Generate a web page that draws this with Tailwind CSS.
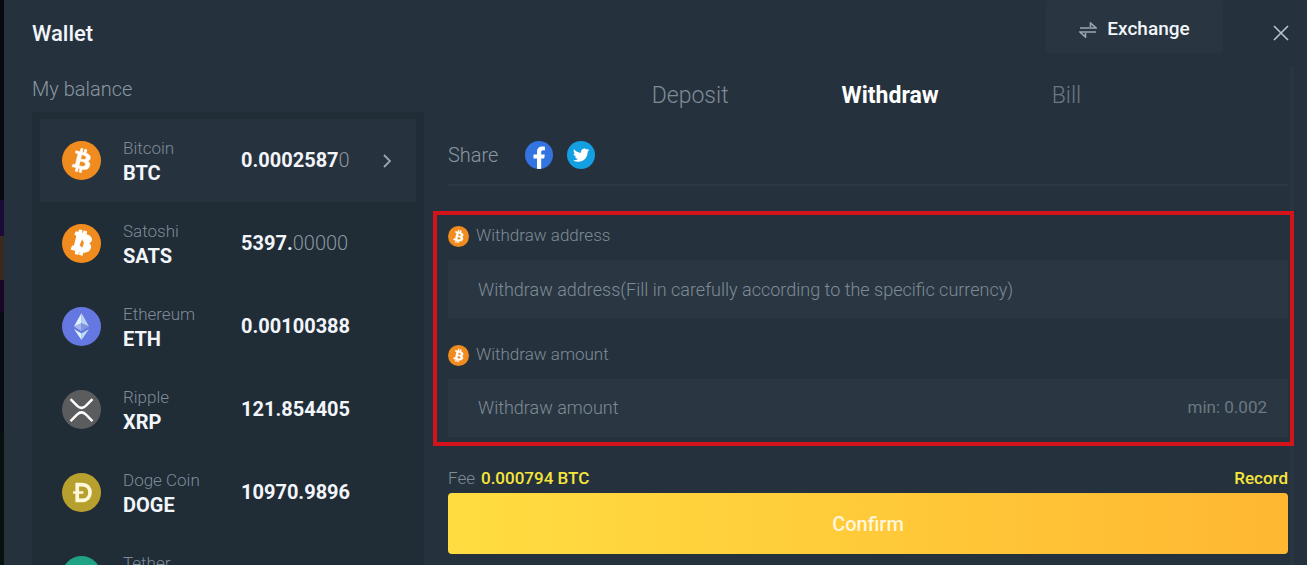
<!DOCTYPE html>
<html lang="en">

<head>
  <meta charset="UTF-8">
  <meta name="viewport" content="width=device-width, initial-scale=1">
  <title>Wallet</title>
  <script src="https://cdn.jsdelivr.net/npm/@tailwindcss/browser@4"></script>
</head>

<body class="flex h-screen overflow-hidden bg-[#05070d] font-['Roboto',sans-serif] text-[#7f8b96]">
  <!-- shared icons -->
  <svg class="hidden">
    <symbol id="btc" viewBox="0 0 32 32">
      <circle cx="16" cy="16" r="16" fill="#f08c1f" />
      <path fill="#fff" stroke="#fff" stroke-width=".5" d="M23.189 14.02c.314-2.096-1.283-3.223-3.465-3.975l.708-2.84-1.728-.43-.69 2.765c-.454-.114-.92-.22-1.385-.326l.695-2.783L15.596 6l-.708 2.839c-.376-.086-.746-.17-1.104-.26l.002-.009-2.384-.595-.46 1.846s1.283.294 1.256.312c.7.175.826.638.805 1.006l-.806 3.235c.048.012.11.03.18.057l-.183-.045-1.13 4.532c-.086.212-.303.531-.793.41.018.025-1.256-.313-1.256-.313l-.858 1.978 2.25.561c.418.105.828.215 1.231.318l-.715 2.872 1.727.43.708-2.84c.472.127.93.245 1.378.357l-.706 2.828 1.728.43.715-2.866c2.948.558 5.164.333 6.097-2.333.752-2.146-.037-3.385-1.588-4.192 1.13-.26 1.98-1.003 2.207-2.538zm-3.95 5.538c-.533 2.147-4.148.986-5.32.695l.95-3.805c1.172.293 4.929.872 4.37 3.11zm.535-5.569c-.487 1.953-3.495.96-4.47.717l.86-3.45c.975.243 4.118.696 3.61 2.733z" />
    </symbol>
  </svg>

  <!-- page behind the dialog -->
  <div class="flex w-1 shrink-0 flex-col" aria-hidden="true">
    <div class="h-[200px] bg-[#080910]"></div>
    <div class="h-9 bg-[#1c0a38]"></div>
    <div class="h-11 bg-[#3a2a20]"></div>
    <div class="h-8 bg-[#180826]"></div>
    <div class="h-[120px] bg-[#060b14]"></div>
    <div class="flex-1 bg-[#07120e]"></div>
  </div>

  <main class="flex min-w-0 flex-1 flex-col bg-[#25323d]">
    <header class="flex h-[66px] shrink-0 items-center pl-7 pr-[18px]">
      <h1 class="flex-1 text-[22px] font-medium text-[#f2f5fa]">Wallet</h1>
      <button class="mr-[50px] flex h-[53px] w-[177px] items-center justify-center gap-2.5 self-start rounded bg-[#293540] pt-1.5 text-[19px] font-medium text-[#f2f5fa]">
        <svg class="h-4 w-[18px]" viewBox="0 0 18 16" fill="none" stroke="#9aa6b0" stroke-width="1.6">
          <path d="M1 6h16L11.500 1v4M17 10H1l5.500 5v-4" />
        </svg>
        Exchange
      </button>
      <button aria-label="Close">
        <svg class="size-4" viewBox="0 0 16 16" fill="none" stroke="#b9c3cb" stroke-width="1.6">
          <path d="M1 1l14 14M15 1L1 15" />
        </svg>
      </button>
    </header>

    <div class="flex min-h-0 flex-1 pl-7 pr-[13px]">
      <aside class="flex w-[392px] shrink-0 flex-col">
        <h2 class="h-[46px] pt-2 text-xl font-light leading-[30px] text-[#8a96a1]">My balance</h2>
        <ul class="min-h-0 flex-1 overflow-hidden bg-[#202c36] px-2 pt-[7px] text-xl font-bold leading-[25px] text-[#f2f5fa]">
          <li class="flex h-[83px] items-center bg-[#26323d] pl-[22px] pr-6">
            <svg class="mr-[22px] size-[39px]"><use href="#btc" /></svg>
            <div class="w-[118px]">
              <p class="text-[17px] font-light leading-[25px] text-[#7f8b96]">Bitcoin</p>
              <p>BTC</p>
            </div>
            <p class="flex-1">0.0002587<span class="font-light text-[#8a96a1]">0</span></p>
            <svg class="h-3.5 w-2.5" viewBox="0 0 10 14" fill="none" stroke="#9aa6b0" stroke-width="1.8">
              <path d="M2 1l6 6-6 6" />
            </svg>
          </li>
          <li class="flex h-[83px] items-center pl-[22px] pr-6">
            <svg class="mr-[22px] size-[39px]" viewBox="0 0 32 32">
              <circle cx="16" cy="16" r="16" fill="#f08c1f" />
              <path fill="#fff" stroke="#fff" stroke-linejoin="round" d="M11.500 6.500l2.300.5.500-2 2 .5-.4 2 1.500.4.700-2 2 .6-.7 2.200c3 .8 5 2.200 4.700 4.500-.2 1.300-1.500 2-2.700 2.400 1.500 1 2.500 2.300 1.800 4.200-.8 2.400-3.300 3.500-6.100 3.100l-.6 2.600-2-.5.500-2.500-1.300-.3-.7 2.600-2-.5.600-2.600-4-1 1-2.500 1.500.2 2.300-9-1.700-.8z" />
              <path fill="#f08c1f" d="M16.500 12.500l1.500 3-1.500 4-2-2z" />
            </svg>
            <div class="w-[118px]">
              <p class="text-[17px] font-light leading-[25px] text-[#7f8b96]">Satoshi</p>
              <p>SATS</p>
            </div>
            <p class="flex-1">5397.<span class="font-light text-[#8a96a1]">00000</span></p>
          </li>
          <li class="flex h-[83px] items-center pl-[22px] pr-6">
            <svg class="mr-[22px] size-[39px]" viewBox="0 0 32 32">
              <circle cx="16" cy="16" r="16" fill="#6577e0" />
              <path fill="#e3f1fb" d="M16 5l-6.200 11L16 13.300z" />
              <path fill="#b5d3f2" d="M16 5l6.200 11L16 13.300z" />
              <path fill="#a3b8ea" d="M9.800 16L16 13.300v6.500z" />
              <path fill="#7f96dc" d="M22.200 16L16 13.300v6.500z" />
              <path fill="#e3f1fb" d="M9.800 18L16 21.700V27z" />
              <path fill="#b5e0f2" d="M22.200 18L16 21.700V27z" />
            </svg>
            <div class="w-[118px]">
              <p class="text-[17px] font-light leading-[25px] text-[#7f8b96]">Ethereum</p>
              <p>ETH</p>
            </div>
            <p class="flex-1">0.00100388</p>
          </li>
          <li class="flex h-[83px] items-center pl-[22px] pr-6">
            <svg class="mr-[22px] size-[39px]" viewBox="0 0 32 32" fill="none">
              <circle cx="16" cy="16" r="16" fill="#5b5c5e" />
              <path stroke="#fff" stroke-width="2" d="M7 7.500l5.500 5.500q3.500 3.300 7 0L25 7.500M7 25.500l5.500-5.500q3.500-3.300 7 0l5.500 5.500" />
            </svg>
            <div class="w-[118px]">
              <p class="text-[17px] font-light leading-[25px] text-[#7f8b96]">Ripple</p>
              <p>XRP</p>
            </div>
            <p class="flex-1">121.854405</p>
          </li>
          <li class="flex h-[83px] items-center pl-[22px] pr-6">
            <svg class="mr-[22px] size-[39px]" viewBox="0 0 32 32" fill="none">
              <circle cx="16" cy="16" r="16" fill="#b7a02e" />
              <path stroke="#fff8dc" stroke-width="3" d="M12.500 9.500h4c4 0 6.500 2.500 6.500 6.500s-2.500 6.500-6.500 6.500h-4z" />
              <path stroke="#fff8dc" stroke-width="2" d="M9 16h8.500" />
            </svg>
            <div class="w-[118px]">
              <p class="text-[17px] font-light leading-[25px] text-[#7f8b96]">Doge Coin</p>
              <p>DOGE</p>
            </div>
            <p class="flex-1">10970.9896</p>
          </li>
          <li class="flex h-[83px] items-center pl-[22px] pr-6">
            <svg class="mr-[22px] size-[39px]" viewBox="0 0 32 32">
              <circle cx="16" cy="16" r="16" fill="#1fa285" />
              <path fill="#fff" d="M9 9h14v3h-5.500v12h-3V12H9z" />
            </svg>
            <div class="w-[118px]">
              <p class="text-[17px] font-light leading-[25px] text-[#7f8b96]">Tether</p>
              <p>USDT</p>
            </div>
          </li>
        </ul>
      </aside>

      <section class="ml-[9px] flex min-w-0 flex-1 flex-col border-r-4 border-[#293641]">
        <nav class="flex h-[60px] shrink-0 items-center justify-center gap-[113px] pl-2.5 text-[23px]">
          <a href="#" class="font-light text-[#7f8b96]">Deposit</a>
          <a href="#" class="font-bold text-white">Withdraw</a>
          <a href="#" class="font-light text-[#6c7883]">Bill</a>
        </nav>

        <div class="ml-[15px] mr-0.5 flex h-[60px] shrink-0 items-center gap-3.5 border-b-2 border-[#2c3944]">
          <span class="w-[63px] text-xl font-light text-[#8a96a1]">Share</span>
          <a href="#" aria-label="Facebook">
            <svg class="size-7" viewBox="0 0 28 28">
              <circle cx="14" cy="14" r="14" fill="#3474e0" />
              <path fill="#fff" d="M12 27.800V17.500H8.500v-4H12V11c0-3.600 2-5.500 5.200-5.500 1.300 0 2.800.3 2.800.3v3.400h-1.700c-1.700 0-2.100 1-2.100 2v2.300h3.600l-.6 4h-3v10.300a14 14 0 0 1-4.200 0z" />
            </svg>
          </a>
          <a href="#" aria-label="Twitter">
            <svg class="size-7" viewBox="0 0 28 28">
              <circle cx="14" cy="14" r="14" fill="#139fe2" />
              <path fill="#fff" transform="translate(6 6) scale(.68)" d="M23.950 4.570a10 10 0 0 1-2.820.770 4.960 4.960 0 0 0 2.160-2.720c-.95.550-2 .950-3.130 1.180a4.920 4.920 0 0 0-8.380 4.480C7.690 8.090 4.070 6.130 1.640 3.160a4.820 4.820 0 0 0-.67 2.480c0 1.710.870 3.210 2.190 4.100a4.900 4.900 0 0 1-2.230-.62v.06a4.920 4.920 0 0 0 3.950 4.830 5 5 0 0 1-2.210.080 4.940 4.940 0 0 0 4.600 3.420A9.870 9.870 0 0 1 0 19.540a14 14 0 0 0 7.550 2.210c9.050 0 14-7.500 14-13.980 0-.21 0-.42-.02-.63a9.940 9.940 0 0 0 2.460-2.550z" />
            </svg>
          </a>
        </div>

        <form class="-mr-1 mt-[25px] flex shrink-0 flex-col gap-[21px] border-4 border-[#d4141b] pb-[5px] pl-[11px] pr-0.5 pt-[5px]">
          <div class="flex flex-col gap-2">
            <label for="address" class="flex h-8 items-center gap-[7px] text-[17px] font-light">
              <svg class="size-[21px]"><use href="#btc" /></svg>
              Withdraw address
            </label>
            <input id="address" type="text" placeholder="Withdraw address(Fill in carefully according to the specific currency)"
              class="h-[58px] w-full bg-[#2a3742] px-[30px] text-lg font-light placeholder:text-[#7f8b96] focus:outline-none">
          </div>
          <div class="flex flex-col gap-2">
            <label for="amount" class="flex h-8 items-center gap-[7px] text-[17px] font-light">
              <svg class="size-[21px]"><use href="#btc" /></svg>
              Withdraw amount
            </label>
            <div class="flex h-[58px] items-center bg-[#2a3742] pl-[30px] pr-[21px]">
              <input id="amount" type="text" placeholder="Withdraw amount"
                class="min-w-0 flex-1 text-lg font-light placeholder:text-[#7f8b96] focus:outline-none">
              <span class="text-[17px] text-[#6c7883]">min: 0.002</span>
            </div>
          </div>
        </form>

        <div class="ml-[15px] mr-0.5 mt-[19px] flex h-7 shrink-0 items-center justify-between text-[17px] font-medium text-[#f7e53b]">
          <p><span class="mr-1.5 font-light text-[#7f8b96]">Fee</span>0.000794 BTC</p>
          <a href="#">Record</a>
        </div>
        <button class="ml-[15px] mr-0.5 h-[61px] shrink-0 rounded-sm bg-linear-to-r from-[#ffdd40] to-[#ffb732] text-xl font-medium text-[#fff6dc]">Confirm</button>
      </section>
    </div>
  </main>
</body>

</html>
